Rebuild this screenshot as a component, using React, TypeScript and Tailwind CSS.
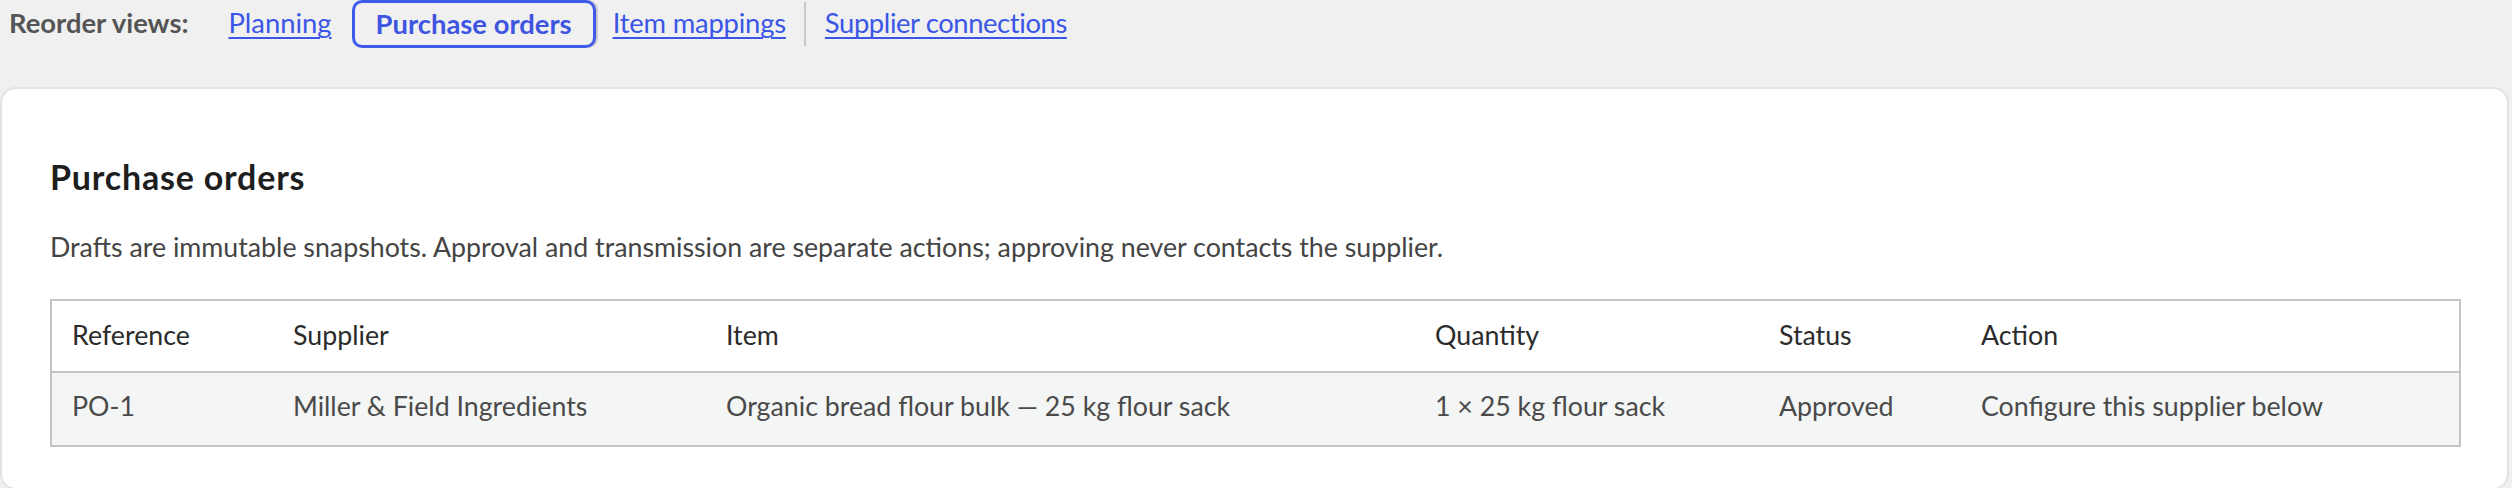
import React from 'react';

const rows = [
  {
    reference: 'PO-1',
    supplier: 'Miller & Field Ingredients',
    item: 'Organic bread flour bulk — 25 kg flour sack',
    quantity: '1 × 25 kg flour sack',
    status: 'Approved',
    action: 'Configure this supplier below',
  },
];

export default function App() {
  return (
    <div className="min-h-screen bg-[#f0f0f0] font-[Lato,sans-serif] text-[26.75px]">
      {/* view switcher */}
      <nav className="flex items-center h-[48px] pl-[9px] text-[27.4px]">
        <span className="font-bold text-[#555555] mr-[40px] -mt-[2px]">Reorder views:</span>
        <a href="#" className="text-[#3b56e6] underline underline-offset-[4px] -mt-[2px]">
          Planning
        </a>
        <span className="ml-[20px] h-[48px] flex items-center px-[21px] border-[3px] border-[#3d5ae8] rounded-[10px] font-bold text-[#3d55e0] shadow-[2px_0_0_#c8c8c8]">
          Purchase orders
        </span>
        <a href="#" className="ml-[17px] text-[#3b56e6] underline underline-offset-[4px] tracking-[-0.2px] -mt-[2px]">
          Item mappings
        </a>
        <span className="ml-[18px] w-[2px] h-[44px] bg-[#cacaca]" />
        <a href="#" className="ml-[19px] text-[#3b56e6] underline underline-offset-[4px] tracking-[-0.4px] -mt-[2px]">
          Supplier connections
        </a>
      </nav>

      <section className="mt-[39px] mr-[3px] bg-white border-2 border-[#e3e3e3] rounded-[16px] pt-[68px] pb-[41px] pl-[48px] pr-[46px]">
        <h1 className="text-[34px] leading-[40px] tracking-[0.8px] font-bold text-[#1e1e1e]">Purchase orders</h1>
        <p className="mt-[32px] leading-[36px] text-[#444444]">
          Drafts are immutable snapshots. Approval and transmission are separate actions; approving never
          contacts the supplier.
        </p>
        <table className="mt-[34px] w-full table-fixed border-collapse border-2 border-[#c4c4c8] leading-[36px]">
          <colgroup>
            <col className="w-[222px]" />
            <col className="w-[433px]" />
            <col className="w-[709px]" />
            <col className="w-[344px]" />
            <col className="w-[202px]" />
            <col />
          </colgroup>
          <thead>
            <tr className="border-b-2 border-[#c4c4c8] text-left text-[#2b2b2b]">
              <th className="font-normal pt-[16px] pb-[18px] pl-[20px]">Reference</th>
              <th className="font-normal pt-[16px] pb-[18px] pl-[20px]">Supplier</th>
              <th className="font-normal pt-[16px] pb-[18px] pl-[20px]">Item</th>
              <th className="font-normal pt-[16px] pb-[18px] pl-[20px]">Quantity</th>
              <th className="font-normal pt-[16px] pb-[18px] pl-[20px]">Status</th>
              <th className="font-normal pt-[16px] pb-[18px] pl-[20px]">Action</th>
            </tr>
          </thead>
          <tbody>
            {rows.map((row) => (
              <tr key={row.reference} className="bg-[#f4f5f5] text-[#4a4a4a]">
                <td className="pt-[15px] pb-[21px] pl-[20px]">{row.reference}</td>
                <td className="pt-[15px] pb-[21px] pl-[20px]">{row.supplier}</td>
                <td className="pt-[15px] pb-[21px] pl-[20px]">{row.item}</td>
                <td className="pt-[15px] pb-[21px] pl-[20px]">{row.quantity}</td>
                <td className="pt-[15px] pb-[21px] pl-[20px]">{row.status}</td>
                <td className="pt-[15px] pb-[21px] pl-[20px]">{row.action}</td>
              </tr>
            ))}
          </tbody>
        </table>
      </section>
    </div>
  );
}
